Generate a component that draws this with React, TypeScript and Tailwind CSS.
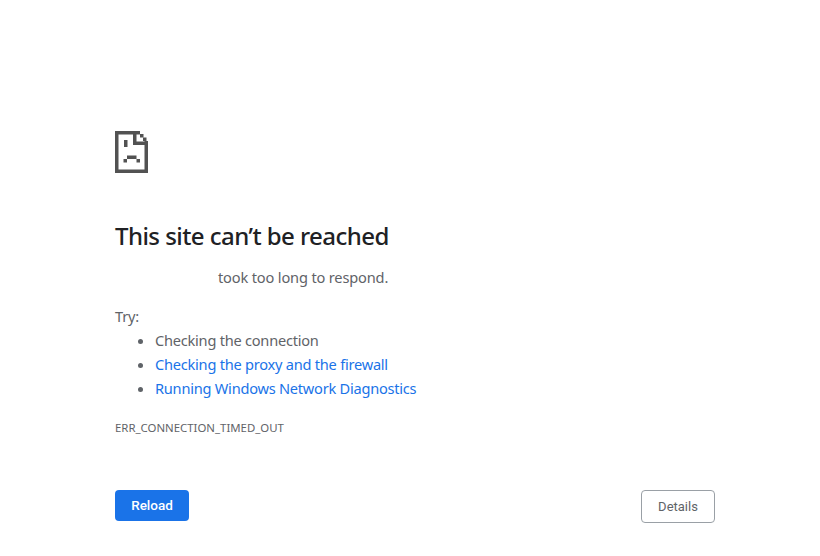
import React from "react";

// Chrome's pixelated "sad file" icon
const SadFile = () => (
  <svg width="33" height="42" viewBox="0 0 33 42" fill="#525252">
    <rect x="0" y="0" width="25" height="3.5" />
    <rect x="0" y="0" width="3.5" height="42" />
    <rect x="0" y="38.5" width="33" height="3.5" />
    <rect x="29.5" y="10" width="3.5" height="32" />
    <rect x="18" y="0" width="3.5" height="14" />
    <rect x="18" y="10.5" width="15" height="3.5" />
    <rect x="25" y="3" width="3.5" height="3.5" />
    <rect x="28" y="6.5" width="3.5" height="3.5" />
    <rect x="9" y="9" width="3.5" height="7" />
    <rect x="12" y="24.5" width="9.5" height="3.5" />
    <rect x="8.5" y="28" width="3.5" height="3.5" />
    <rect x="21.5" y="28" width="3.5" height="3.5" />
  </svg>
);

export default function App() {
  return (
    <div className="h-[556px] w-[820px] overflow-hidden bg-white font-['Noto_Sans',sans-serif] text-[14.6px] leading-6 tracking-[-0.24px] text-[#5f6368]">
      <div className="flex h-full flex-col pr-[105px] pl-[115px] pt-[131px]">
        <SadFile />
        <h1 className="mt-[45px] text-[24px] leading-[36px] font-medium tracking-[-0.55px] text-[#202124]">
          This site can’t be reached
        </h1>
        <p className="mt-[11px] pl-[103px] tracking-[-0.16px]">took too long to respond.</p>
        <p className="mt-[15px]">Try:</p>
        <ul className="list-disc pl-10 marker:text-[#5f6368]">
          <li>Checking the connection</li>
          <li className="text-[#1a73e8]">Checking the proxy and the firewall</li>
          <li className="text-[#1a73e8]">Running Windows Network Diagnostics</li>
        </ul>
        <div className="mt-[20px] text-[11.4px] leading-4 tracking-normal">ERR_CONNECTION_TIMED_OUT</div>
        <div className="mt-[54px] flex items-start justify-between tracking-normal">
          <button className="h-[31px] w-[74px] rounded-[4px] bg-[#1a73e8] pb-[2px] font-['Roboto',sans-serif] text-[13.5px] font-medium text-white">
            Reload
          </button>
          <button className="h-[33px] w-[74px] rounded-[4px] border border-[#9aa0a6] bg-white font-['Roboto',sans-serif] text-[13px] font-normal text-[#5f6368]">
            Details
          </button>
        </div>
      </div>
    </div>
  );
}
